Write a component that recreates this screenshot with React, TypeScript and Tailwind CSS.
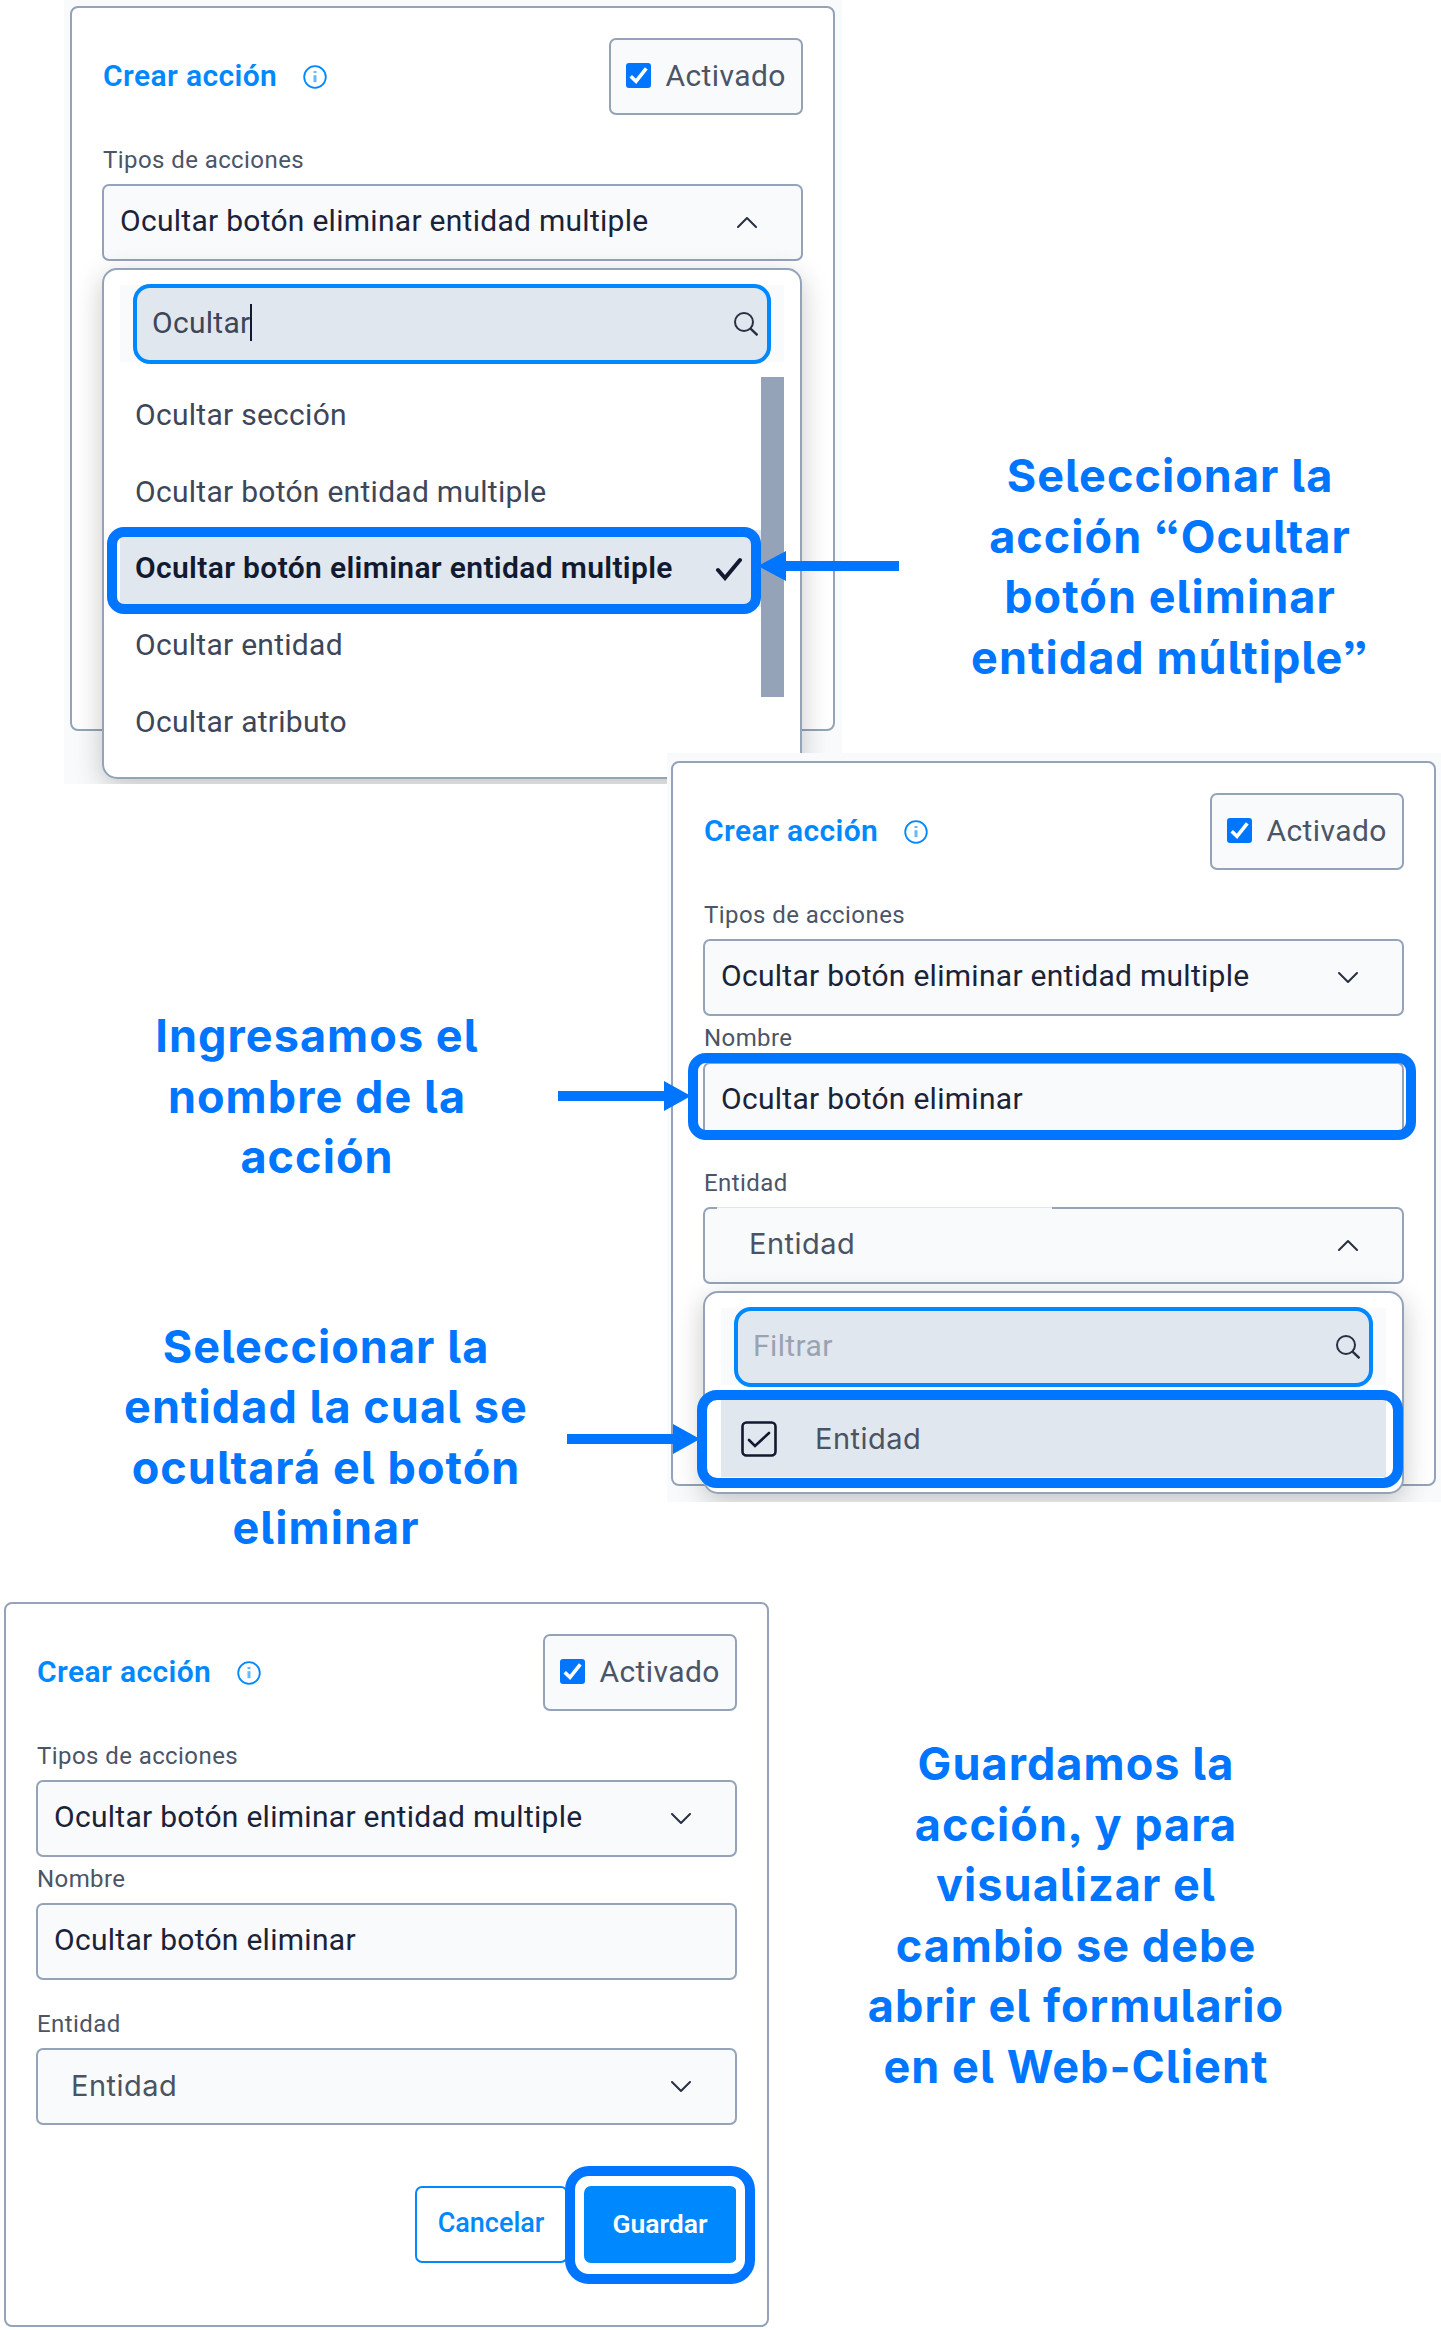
import type { ReactNode } from "react";

const cx = (...parts: (string | false | undefined)[]) => parts.filter(Boolean).join(" ");

function Chevron({ up = false }: { up?: boolean }) {
  return (
    <svg viewBox="0 0 20 12" className={cx("h-3 w-5", up && "relative -top-px")} fill="none" stroke="#293042" strokeWidth="2" strokeLinecap="round" strokeLinejoin="round">
      <path d={up ? "M1 11 10 2l9 9" : "M1 1l9 9 9-9"} />
    </svg>
  );
}

function Field({ label, gap, children, alt, chevron, trimmed = false }: { label: string; gap: string; children: ReactNode; alt?: string; chevron?: "up" | "down"; trimmed?: boolean }) {
  return (
    <div className={cx("flex flex-col justify-end", gap)}>
      <div className="mb-[8px] h-8 whitespace-nowrap pl-px text-[24px] leading-8 text-[#4b5567]">
        <span className="tracking-[0.42px]">{label}</span>
      </div>
      <div className="relative flex h-[77px] shrink-0 items-center justify-between rounded-[7px] border-2 border-[#94a3b8] bg-[#f8fafc] pr-[44px] pl-[16px]">
        {trimmed && <span className="absolute -top-[2px] left-[12px] h-[3px] w-[335px] border-t border-[#dfe6ee] bg-[#f8fafc]" />}
        {alt ? (
          <span className={cx("relative font-['Inter'] text-[29px] leading-9 tracking-[0.5px] text-[#4b5363]", alt)}>{children}</span>
        ) : (
          <span className="relative -top-[1.5px] whitespace-nowrap text-[30px] leading-9 tracking-[0.28px] text-[#1b2338]">{children}</span>
        )}
        {chevron && <Chevron up={chevron === "up"} />}
      </div>
    </div>
  );
}

function Header() {
  return (
    <div className="flex h-[77px] items-center justify-between">
      <div className="flex items-center">
        <h2 className="relative -top-px w-[201px] whitespace-nowrap pl-px text-[30px] font-semibold leading-9 tracking-[0.38px] text-[#0088ff]">Crear acción</h2>
        <svg viewBox="0 0 24 24" className="h-6 w-6" fill="none" stroke="#0088ff">
          <circle cx="12" cy="12" r="10.8" strokeWidth="1.8" />
          <path d="M12 10.2v7" strokeWidth="3" opacity=".6" />
          <path d="M12 6v2" strokeWidth="3" opacity=".6" />
        </svg>
      </div>
      <div className="flex h-[77px] w-[194px] items-center rounded-[7px] border-2 border-[#94a3b8] bg-[#f8fafc] pl-[15px]">
        <span className="relative -top-px mr-[15px] flex h-[25px] w-[25px] items-center justify-center rounded-[3px] bg-[#0075ff]">
          <svg viewBox="0 0 25 25" className="h-[25px] w-[25px]" fill="none" stroke="white" strokeWidth="3.6">
            <path d="M4.7 13.2 10 18.3 20.3 5.3" />
          </svg>
        </span>
        <span className="relative -top-px text-[30px] leading-9 tracking-[0.4px] text-[#4b5567]">Activado</span>
      </div>
    </div>
  );
}

function Panel({ children }: { children: ReactNode }) {
  return <div className="h-[725px] w-[765px] shrink-0 rounded-[8px] border-2 border-[#94a3b8] bg-white pt-[30px] pr-[30.5px] pl-[30px]">{children}</div>;
}

function SearchBox({ children }: { children: ReactNode }) {
  return (
    <div className="mx-[16px] flex h-[77px] items-center bg-[#f8fafc] px-[13px]">
      <div className="flex h-[80px] w-full shrink-0 items-center justify-between rounded-[17px] border-4 border-[#0088ff] bg-[#e1e7ef] pr-[9px] pl-[15px]">
        {children}
        <svg viewBox="0 0 24 24" className="h-6 w-6" fill="none" stroke="#293042" strokeWidth="2">
          <circle cx="10" cy="10" r="9" />
          <path d="m16.3 16.3 7.2 7" strokeWidth="2.4" />
        </svg>
      </div>
    </div>
  );
}

function Arrow({ className, left = false }: { className: string; left?: boolean }) {
  return (
    <svg viewBox="0 0 138 30" className={cx("absolute z-20 h-[30px] w-[138px]", className)} fill="#0075ff">
      {left ? <path d="M-3 15 25 0v10h113v10H25v10z" /> : <path d="M138 15 111 0v10H5v10h106v10z" />}
    </svg>
  );
}

function Caption({ lines, className }: { lines: string[]; className: string }) {
  return (
    <p className={cx("text-center font-['Inter'] text-[45px] font-bold leading-[60.5px] tracking-[1.05px] whitespace-nowrap text-[#0075ff] [font-feature-settings:'cv05','ss03']", className)}>
      {lines.map((line) => (
        <span key={line} className="block">{line}</span>
      ))}
    </p>
  );
}

const options = ["Ocultar sección", "Ocultar botón entidad multiple", "Ocultar botón eliminar entidad multiple", "Ocultar entidad", "Ocultar atributo"];

export default function App() {
  return (
    <main className="h-[2330px] w-[1441px] overflow-hidden bg-white font-['Roboto',sans-serif]">
      <section className="relative flex h-[753px] items-start">
        <div className="relative ml-[64px] h-[784px] w-[778px] shrink-0 overflow-hidden bg-[#f8fafc] pt-[6px] pl-[6px]">
          <Panel>
            <Header />
            <Field label="Tipos de acciones" gap="h-[146px]" chevron="up">{options[2]}</Field>
          </Panel>
          <div className="absolute top-[268px] left-[38px] h-[511px] w-[700px] rounded-[15px] border-2 border-[#94a3b8] bg-white pt-[15px] shadow-[0_8px_28px_rgba(0,0,0,0.22)]">
            <SearchBox>
              <span className="relative -top-px flex items-center text-[30px] leading-9 tracking-[0.28px] text-[#3e4659]">
                Ocultar<span className="h-[37px] w-[2px] bg-[#111a30]" />
              </span>
            </SearchBox>
            <div className="mx-[16px] mt-[15px] flex">
              <ul className="w-[641px]">
                {options.map((option, i) => (
                  <li key={option} className={cx("flex h-[76.7px] items-center justify-between pr-[18px] pl-[15px] text-[30px] leading-9 whitespace-nowrap", i === 2 ? "bg-[#e1e7ef] font-semibold tracking-[0.35px] text-[#111a30]" : "tracking-[0.28px] text-[#3e4659]")}>
                    <span className={cx("relative", i === 2 && "-top-px")}>{option}</span>
                    {i === 2 && (
                      <svg viewBox="0 0 28 24" className="h-6 w-7" fill="none" stroke="#111a30" strokeWidth="4" strokeLinecap="round">
                        <path d="m3 13 7 8L25 3" />
                      </svg>
                    )}
                  </li>
                ))}
              </ul>
              <span className="h-[320px] w-[23px] bg-[#94a3b8]" />
            </div>
          </div>
        </div>
        <div className="absolute top-[527px] left-[107px] z-20 h-[87px] w-[654px] rounded-[17px] border-[10px] border-[#0075ff]" />
        <Arrow left className="top-[551px] left-[761px] overflow-visible" />
        <Caption className="mt-[446px] ml-[78px] w-[500px]" lines={["Seleccionar la", "acción “Ocultar", "botón eliminar", "entidad múltiple”"]} />
      </section>

      <section className="relative flex h-[843px] items-start">
        <div className="w-[667px] shrink-0">
          <Caption className="mt-[253px] ml-[67px] w-[500px]" lines={["Ingresamos el", "nombre de la", "acción"]} />
          <Caption className="mt-[129px] ml-[76px] w-[500px]" lines={["Seleccionar la", "entidad la cual se", "ocultará el botón", "eliminar"]} />
        </div>
        <div className="relative z-10 h-[749px] w-[774px] shrink-0 overflow-hidden bg-[#f8fafc] pt-[8px] pl-[4px]">
          <Panel>
            <Header />
            <Field label="Tipos de acciones" gap="h-[146px]" chevron="down">{options[2]}</Field>
            <Field label="Nombre" gap="h-[122.5px]">Ocultar botón eliminar</Field>
            <Field label="Entidad" gap="h-[145.5px]" alt="-top-[2px] pl-[28px]" chevron="up" trimmed>Entidad</Field>
          </Panel>
          <div className="absolute top-[538px] left-[36px] h-[203px] w-[701px] rounded-[15px] border-2 border-[#94a3b8] bg-white pt-[15px] shadow-[0_8px_28px_rgba(0,0,0,0.22)]">
            <SearchBox>
              <span className="relative -top-px text-[30px] leading-9 tracking-[0.4px] text-[#9aa3b2]">Filtrar</span>
            </SearchBox>
            <div className="mx-[16px] mt-[15px] flex h-[77px] items-center bg-[#e1e7ef] pl-[20px]">
              <svg viewBox="0 0 36 36" className="h-9 w-9" fill="none" stroke="#111a30" strokeWidth="2.6" strokeLinecap="round">
                <rect x="1.5" y="1.5" width="33" height="33" rx="4" />
                <path d="m8 19 6 6L28 12" />
              </svg>
              <span className="ml-[38px] font-['Inter'] text-[29px] leading-9 tracking-[0.5px] text-[#4b5363]">Entidad</span>
            </div>
          </div>
        </div>
        <div className="absolute top-[300px] left-[688px] z-20 h-[87px] w-[728px] rounded-[18px] border-[10px] border-[#0075ff]" />
        <div className="absolute top-[637px] left-[697px] z-20 h-[98px] w-[706px] rounded-[20px] border-[10px] border-[#0075ff]" />
        <Arrow className="top-[328px] left-[553px]" />
        <Arrow className="top-[671px] left-[562px]" />
      </section>

      <section className="relative flex h-[734px] items-start">
        <div className="h-[734px] w-[769px] shrink-0 bg-white pt-[6px] pl-[4px]">
          <Panel>
            <Header />
            <Field label="Tipos de acciones" gap="h-[146px]" chevron="down">{options[2]}</Field>
            <Field label="Nombre" gap="h-[122.5px]">Ocultar botón eliminar</Field>
            <Field label="Entidad" gap="h-[145.5px]" alt="-top-px pl-[17px]" chevron="down">Entidad</Field>
            <div className="mt-[61px] flex justify-end gap-[16px] text-[27px] font-medium">
              <button className="h-[77px] w-[153px] rounded-[7px] border-2 border-[#0088ff] bg-white pb-[2px] text-[#0088ff]">Cancelar</button>
              <button className="relative h-[77px] w-[153px] rounded-[7px] bg-[#0088ff] pb-[2px] text-[26.5px] font-semibold text-white">
                Guardar
                <span className="absolute -top-[20px] -left-[19px] h-[118px] w-[190px] rounded-[24px] border-[10px] border-[#0075ff] shadow-[inset_0_0_0_9px_white]" />
              </button>
            </div>
          </Panel>
        </div>
        <Caption className="mt-[138px] ml-[57px] w-[500px]" lines={["Guardamos la", "acción, y para", "visualizar el", "cambio se debe", "abrir el formulario", "en el Web-Client"]} />
      </section>
    </main>
  );
}
